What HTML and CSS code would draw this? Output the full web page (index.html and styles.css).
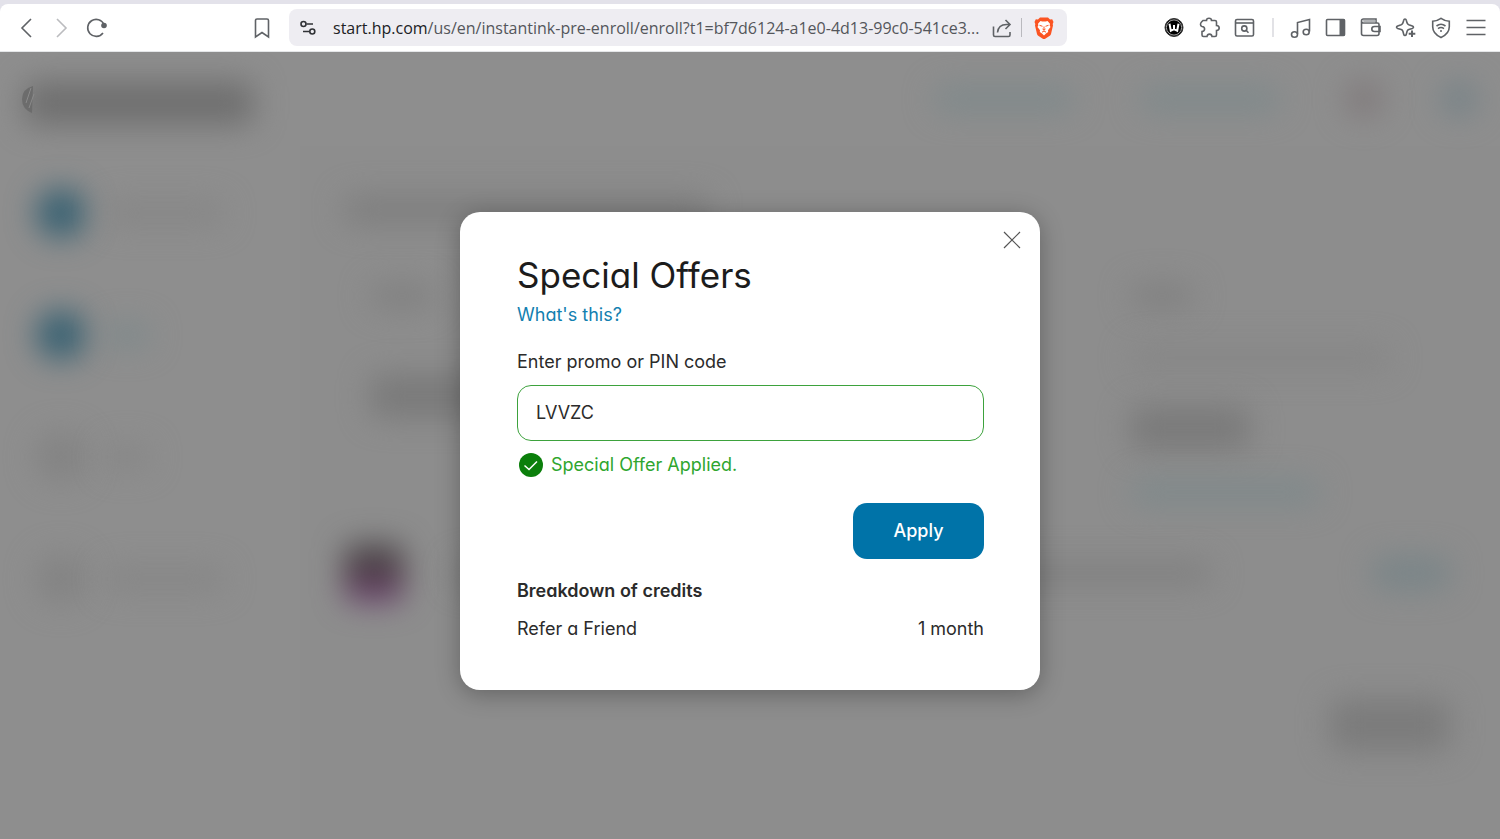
FILE: index.html
```html
<!doctype html>
<html lang="en">
<head>
<meta charset="utf-8">
<title>Special Offers</title>
<link rel="stylesheet" href="styles.css">
</head>

<body>

<!-- browser toolbar -->
<header class="browser">
  <div class="toolbar">
    <div class="nav-buttons">
      <button class="tool" aria-label="Back">
        <svg viewBox="0 0 22 22"><path d="M15 2 6 11l9 9"/></svg>
      </button>
      <button class="tool disabled" aria-label="Forward" disabled>
        <svg viewBox="0 0 22 22"><path d="m6 2 9 9-9 9"/></svg>
      </button>
      <button class="tool" aria-label="Reload">
        <svg viewBox="0 0 22 22"><path d="M17 16A8.500 8.500 0 1 1 18 7.500"/><circle cx="18" cy="8.500" r="2.800" class="solid"/></svg>
      </button>
      <button class="tool bookmark" aria-label="Bookmark">
        <svg viewBox="0 0 22 22"><path d="M4.500 3.500q0-1.500 1.500-1.500h10q1.500 0 1.500 1.500V20L11 15.500 4.500 20z"/></svg>
      </button>
    </div>

    <div class="address">
      <button class="tool tune" aria-label="Site settings">
        <svg viewBox="0 0 22 22"><circle cx="6.500" cy="7" r="2.500"/><path d="M9.500 7H16M6 14.500h6.500"/><circle cx="15.300" cy="14.500" r="2.500"/></svg>
      </button>
      <span class="url"><b>start.hp.com</b>/us/en/instantink-pre-enroll/enroll?t1=bf7d6124-a1e0-4d13-99c0-541ce3...</span>
      <button class="tool" aria-label="Share">
        <svg viewBox="0 0 22 22"><path d="M2.500 9.500V18q0 1.500 1.500 1.500h13.500q1.500 0 1.500-1.500v-3M6.500 15.500c.5-5 4-8 9-8h3M14.500 3l4.500 4.500-4.500 4.500"/></svg>
      </button>
      <span class="line"></span>
      <button class="tool" aria-label="Brave Shields">
        <svg viewBox="0 0 22 22" class="brave">
          <path class="orange" d="M7 .5h8l2 2 2.200-.2L20.500 5l-.8 2 .3 1.500-2 8.500q-.3 1-1.200 1.700l-4.600 3.100q-1.200.7-2.400 0L5.200 18.700Q4.300 18 4 17L2 8.500 2.300 7l-.8-2 1.300-2.700L5 2.500z"/>
          <path class="face" d="m7.500 4 1.800.6h3.400l1.800-.6 2.500 2.800-.3 1.800.8 1.500-2.500 3.200.2 1.700-2.200 1.600L11 18.500 9 16.600 6.800 15l.2-1.700-2.500-3.200.8-1.500L5 6.800z"/>
          <path class="mark" d="m6.500 8.300 3 1M15.500 8.300l-3 1M11 9.500v3.500M9.500 12l1.500 1.200 1.500-1.200M9 15.200l2-1.200 2 1.200"/>
        </svg>
      </button>
    </div>

    <div class="extensions">
      <button class="tool" aria-label="Extension W">
        <svg viewBox="0 0 22 22"><circle cx="10" cy="10.500" r="9" class="black"/><circle cx="10" cy="10.500" r="7.600" class="ring"/><path class="w" d="m5.500 6.700 1.300 7 3.200-1.500V8v4.200l3.200 1.500 1.300-7"/></svg>
      </button>
      <button class="tool" aria-label="Extensions">
        <svg viewBox="0 0 22 22"><path d="M4 3.500h3.500C7.500 2.200 8.600 1.300 10 1.300s2.500.9 2.500 2.200H16q1.500 0 1.500 1.500v3.500c1.600.2 2.700 1.200 2.700 2.500s-1.100 2.300-2.700 2.500V18q0 1.500-1.500 1.500h-3c-.2-1.500-1.200-2.400-2.500-2.400S8.200 18 8 19.500H4.500Q3 19.500 3 18v-3.500c1.600-.2 2.600-1.200 2.600-2.500S4.600 9.700 3 9.500Q1.500 9 1.500 7.500T2.500 5z"/></svg>
      </button>
      <button class="tool" aria-label="Search tabs">
        <svg viewBox="0 0 22 22"><rect x="1.500" y="2.500" width="18" height="16.500" rx="1.500"/><path d="M1.500 6h18"/><circle cx="10.300" cy="11.500" r="2.600"/><path d="m12.300 13.500 2.200 2.300"/></svg>
      </button>
      <span class="line pale"></span>
      <button class="tool" aria-label="Music">
        <svg viewBox="0 0 22 22"><path d="M7.500 17V5.500L19.500 2.500v12"/><ellipse cx="4.500" cy="17.500" rx="3" ry="2.700"/><ellipse cx="16.200" cy="15" rx="3" ry="2.700"/></svg>
      </button>
      <button class="tool" aria-label="Sidebar">
        <svg viewBox="0 0 22 22"><rect x="1.500" y="2.500" width="18" height="16" rx="1"/><path class="solid" d="M14.500 2.500h5.500v16h-5.500z"/></svg>
      </button>
      <button class="tool" aria-label="Wallet">
        <svg viewBox="0 0 22 22"><path d="M1.500 4v12.500q0 2 2 2H17q2 0 2-2V7.500Q19 6 17.500 6h-14Q1.500 6 1.500 4t2-2H16v4M20 9.500h-5.500q-2.700 0-2.700 2.500t2.700 2.500H20z"/><path class="shade" d="M3 3h12.500v2.200H3.500z"/></svg>
      </button>
      <button class="tool" aria-label="Leo AI">
        <svg viewBox="0 0 22 22"><path d="M10 2q1 0 1.300 1.300l.8 2.800q.4 1.200 1.700 1.700l3.500 1.200q1.200.5 1.200 1.200t-1.200 1.200l-3.500 1.200q-1.300.5-1.700 1.700l-.8 2.900Q11 18.500 10 18.500t-1.300-1.300l-.8-2.900q-.4-1.200-1.700-1.700l-3.500-1.200Q1.500 10.900 1.500 10.200T2.700 9l3.500-1.200q1.300-.5 1.700-1.700l.8-2.800Q9 2 10 2z"/><path class="bold" d="M17 13.500V20M13.700 16.800h6.600"/></svg>
      </button>
      <button class="tool" aria-label="VPN">
        <svg viewBox="0 0 22 22"><path d="M11 1.300q4 2.700 8.300 3v5.500q0 7-8.300 10.700Q2.700 16.800 2.700 9.800V4.300q4.300-.3 8.300-3zM6.500 9q4.500-3.400 9 0M8 11.700q3-2.300 6 0"/><circle cx="11" cy="14" r="1" class="solid"/></svg>
      </button>
      <button class="tool" aria-label="Menu">
        <svg viewBox="0 0 22 22"><path d="M1.500 3.500h19M1.500 10.500h19M1.500 17.500h19"/></svg>
      </button>
    </div>
  </div>
</header>

<div class="page">

  <!-- enroll page behind the dialog, blurred -->
  <div class="behind" aria-hidden="true">
    <div class="site-header">
      <svg class="logo" viewBox="0 0 16 30"><path class="disc" d="M13 2Q2 5 2 15t10 14z"/><path class="slash" d="M11 4 6 19M14 10l-5 14"/></svg>
      <div class="blob brand"></div>
      <div class="blob link top-link"></div>
      <div class="blob link top-link"></div>
      <div class="blob flag"></div>
      <div class="blob link user"></div>
    </div>
    <div class="site-body">
      <div class="steps">
        <div class="step done"><div class="blob dot"></div><div class="blob text"></div></div>
        <div class="step done"><div class="blob dot"></div><div class="blob link short"></div></div>
        <div class="step"><div class="blob dot"></div><div class="blob text short"></div></div>
        <div class="step"><div class="blob dot"></div><div class="blob text"></div></div>
      </div>
      <div class="content">
        <div class="blob title"></div>
        <div class="cards">
          <div class="card">
            <div class="blob text label"></div>
            <div class="blob price"></div>
          </div>
          <div class="card side">
            <div class="blob text label"></div>
            <div class="blob text detail"></div>
            <div class="blob price"></div>
            <div class="blob link offer"></div>
          </div>
        </div>
        <div class="plan">
          <div class="blob picture"></div>
          <div class="blob text summary"></div>
          <div class="blob link edit"></div>
        </div>
        <div class="blob continue"></div>
      </div>
    </div>
  </div>

  <div class="overlay">
    <main class="dialog" role="dialog" aria-labelledby="title">
      <button class="close" aria-label="Close">
        <svg viewBox="0 0 18 18"><path d="m1 1 16 16M17 1 1 17"/></svg>
      </button>

      <h1 id="title">Special Offers</h1>
      <a href="#" class="help">What's this?</a>

      <form>
        <label for="code">Enter promo or PIN code</label>
        <input id="code" type="text" value="LVVZC">
        <p class="success">
          <svg viewBox="0 0 24 24"><circle cx="12" cy="12" r="12"/><path d="m5.500 12.500 4.500 4 8-8"/></svg>
          Special Offer Applied.
        </p>
        <button type="button" class="apply">Apply</button>
      </form>

      <h2>Breakdown of credits</h2>
      <dl>
        <dt>Refer a Friend</dt>
        <dd>1 month</dd>
      </dl>
    </main>
  </div>

</div>

</body>
</html>
```
FILE: styles.css
```css
* {
  box-sizing: border-box;
}

body {
  margin: 0;
  min-height: 100vh;
  display: flex;
  flex-direction: column;
  font-family: Inter, "Liberation Sans", sans-serif;
  font-feature-settings: "cv11";
  color: #2b2b2b;
}

button {
  padding: 0;
  border: 0;
  background: none;
  font: inherit;
}

/* browser toolbar */

.browser {
  padding-top: 4px;
  background: #e3e2ea;
}

.toolbar {
  display: flex;
  align-items: center;
  height: 48px;
  background: #fff;
  border-radius: 8px 8px 0 0;
  border-bottom: 1px solid #e4e6e8;
}

.nav-buttons {
  display: flex;
  gap: 13px;
  width: 289px;
  padding: 0 16px;
}

.bookmark {
  margin-left: auto;
}

.tool {
  flex: none;
  width: 22px;
  height: 22px;
  color: #5f6266;
}

.tool svg {
  display: block;
  fill: none;
  stroke: currentColor;
  stroke-width: 1.6;
}

.tool .solid {
  fill: currentColor;
  stroke: none;
}

.tool .shade {
  fill: #b0b2b5;
  stroke: none;
}

.tool .bold {
  stroke-width: 2;
}

.tool .black {
  fill: #000;
  stroke: #333;
  stroke-width: 1;
}

.tool .ring {
  stroke: #aaa;
  stroke-width: 1;
}

.tool .w {
  stroke: #fff;
  stroke-width: 2;
}

.disabled {
  color: #bbbcbf;
}

.tune {
  color: #303236;
}

.address {
  flex: 1;
  min-width: 0;
  display: flex;
  align-items: center;
  gap: 8px;
  height: 37px;
  padding: 0 12px 0 8px;
  background: #eeedf2;
  border-radius: 8px;
}

.address .line {
  margin: 0 3px 0 0;
}

.url {
  flex: 1;
  min-width: 0;
  padding-left: 6px;
  overflow: hidden;
  white-space: nowrap;
  font-family: "Open Sans", sans-serif;
  font-size: 16px;
  line-height: 24px;
  color: #54565b;
}

.url b {
  font-weight: 400;
  color: #202124;
}

.line {
  width: 1px;
  height: 19px;
  background: #b9b9be;
}

.line.pale {
  width: 2px;
  margin: 0 3px;
  background: #e2e2e6;
}

.tool .orange {
  fill: #fb5422;
  stroke: none;
}

.tool .face {
  fill: #fff;
  stroke: none;
}

.tool .mark {
  stroke: #fb5422;
  stroke-width: 1;
}

.extensions {
  display: flex;
  align-items: center;
  justify-content: flex-end;
  gap: 13px;
  width: 433px;
  padding-right: 13px;
}

/* page behind the dialog */

.page {
  flex: 1;
  display: grid;
  position: relative;
  background: #8d8d8d;
}

.behind {
  display: flex;
  flex-direction: column;
  min-width: 0;
  overflow: hidden;
}

.blob {
  flex: none;
  height: 24px;
  border-radius: 12px;
  background: #808080;
  filter: blur(15px);
}

.blob.link {
  background: #7e898b;
}

.site-header {
  display: flex;
  align-items: center;
  height: 94px;
  padding: 0 24px 0 20px;
  background: #8e8e8e;
}

.logo {
  position: relative;
  z-index: 1;
  width: 16px;
  height: 30px;
  fill: none;
}

.logo .disc {
  fill: #6c6c6c;
}

.logo .slash {
  stroke: #8a8a8a;
  stroke-width: 1;
}

.blob.brand {
  width: 230px;
  height: 44px;
  margin: 8px auto 0 -12px;
  background: #6f6f6f;
}

.top-link {
  width: 140px;
  margin-right: 66px;
}

.blob.flag {
  width: 36px;
  height: 34px;
  margin-right: 60px;
  background: #807a7b;
}

.blob.user {
  width: 34px;
  height: 32px;
  background: #758287;
}

.site-body {
  flex: 1;
  display: flex;
}

.steps {
  width: 300px;
  padding: 37px 36px;
  background: #8e8e8e;
}

.step {
  display: flex;
  align-items: center;
  gap: 18px;
  height: 60px;
  margin-bottom: 62px;
}

.blob.dot {
  width: 50px;
  height: 50px;
  border-radius: 50%;
  background: #838383;
}

.done .blob.dot {
  background: #386172;
}

.step .text {
  width: 120px;
  background: #868686;
}

.step .short {
  width: 46px;
}

.content {
  flex: 1;
  display: flex;
  flex-direction: column;
  padding: 50px 50px 40px 44px;
}

.blob.title {
  width: 366px;
  height: 28px;
  background: #7e7e7e;
}

.cards {
  display: flex;
  justify-content: space-between;
  padding-top: 60px;
}

.card {
  width: 500px;
  height: 257px;
  padding-left: 26px;
}

.card.side {
  width: 320px;
  padding-left: 0;
}

.card .label {
  width: 64px;
}

.card .detail {
  width: 260px;
  margin-top: 38px;
  background: #868686;
}

.blob.price {
  width: 120px;
  height: 44px;
  margin-top: 66px;
  background: #7a7a7a;
}

.side .price {
  margin-top: 36px;
}

.blob.offer {
  width: 190px;
  margin-top: 30px;
}

.plan {
  display: flex;
  align-items: center;
  gap: 50px;
  height: 64px;
}

.blob.picture {
  width: 60px;
  height: 60px;
  background: linear-gradient(#505050, #4f3d48 50%, #75497a);
}

.summary {
  flex: 1;
  margin-right: 110px;
}

.blob.edit {
  width: 78px;
  height: 34px;
  background: #7a8588;
}

.blob.continue {
  width: 120px;
  height: 52px;
  margin: 94px 0 0 auto;
  background: #7b7b7b;
}

/* dialog */

.overlay {
  position: absolute;
  z-index: 2;
  inset: 0;
  display: grid;
  place-items: center;
  padding-top: 10px;
}

.dialog {
  position: relative;
  width: 580px;
  max-width: 90%;
  padding: 39px 56px 49px 57px;
  background: #fff;
  border-radius: 20px;
  box-shadow: 0 4px 24px rgba(0, 0, 0, 0.3);
  font-size: 18px;
  line-height: 24px;
}

.close {
  position: absolute;
  top: 19px;
  right: 19px;
  width: 18px;
  height: 18px;
}

.close svg {
  display: block;
  fill: none;
  stroke: #555;
  stroke-width: 1.2;
}

h1 {
  margin: 0;
  font-size: 35px;
  font-weight: 400;
  line-height: 48px;
  color: #1c1c1c;
}

.help {
  display: block;
  margin: 4px 0 23px;
  color: #1280b0;
  text-decoration: none;
}

label {
  display: block;
}

#code {
  display: block;
  width: 100%;
  height: 56px;
  margin: 11px 0 12px;
  padding: 0 18px;
  border: 1px solid #3da23d;
  border-radius: 14px;
  font: inherit;
  font-feature-settings: inherit;
  color: inherit;
}

.success {
  display: flex;
  align-items: center;
  gap: 8px;
  margin: 0;
  padding-left: 2px;
  color: #2fa62f;
}

.success svg {
  width: 24px;
  height: 24px;
  fill: #0b7f0b;
}

.success path {
  fill: none;
  stroke: #fff;
  stroke-width: 1.5;
}

.apply {
  display: block;
  width: 131px;
  height: 56px;
  margin: 26px 0 20px auto;
  border-radius: 14px;
  background: #0073a8;
  color: #fff;
  font-weight: 500;
}

h2 {
  margin: 0 0 14px;
  font-size: 18px;
  font-weight: 600;
  line-height: 24px;
}

dl {
  display: flex;
  justify-content: space-between;
  margin: 0;
}

dd {
  margin: 0;
}
```
